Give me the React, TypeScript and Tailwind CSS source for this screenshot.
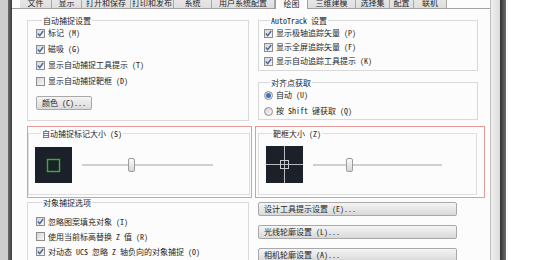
import React from "react";

const font = "font-['Noto_Sans_Mono_CJK_SC','Noto_Sans_CJK_SC',sans-serif]";

const tabs = [
  { t: "文件", w: "w-[32px]" },
  { t: "显示", w: "w-[30px]" },
  { t: "打开和保存", w: "w-[49px]" },
  { t: "打印和发布", w: "w-[43px]" },
  { t: "系统", w: "w-[38px]" },
  { t: "用户系统配置", w: "w-[63px]" },
  { t: "绘图", w: "w-[33px]", on: true },
  { t: "三维建模", w: "w-[48px]" },
  { t: "选择集", w: "w-[34px]" },
  { t: "配置", w: "w-[24px]" },
  { t: "联机", w: "w-[33px]" },
];

function Box({ on }: { on?: boolean }) {
  return (
    <span className="flex h-[9px] w-[9px] shrink-0 items-center justify-center border border-[#8e8e8e] bg-linear-to-br from-[#d6d6d6] to-[#f7f7f7]">
      {on && (
        <svg width="7" height="7" viewBox="0 0 7 7">
          <path d="M0.8 3.6 L2.7 5.6 L6.2 1" fill="none" stroke="#4a66a0" strokeWidth="1.4" />
        </svg>
      )}
    </span>
  );
}

function Radio({ on }: { on?: boolean }) {
  return (
    <span className="flex h-[9px] w-[9px] shrink-0 items-center justify-center rounded-full border border-[#8e8e8e] bg-linear-to-br from-[#d6d6d6] to-[#f7f7f7]">
      {on && <span className="h-[5px] w-[5px] rounded-full bg-[#3f72b8]" />}
    </span>
  );
}

function Row({ on, label, h }: { on?: boolean; label: string; h: string }) {
  return (
    <div className={`flex items-center gap-[3px] ${h}`}>
      <Box on={on} />
      <span>{label}</span>
    </div>
  );
}

function Btn({ label, className }: { label: string; className: string }) {
  return (
    <div
      className={`flex h-[14px] items-center rounded-[2px] border border-[#a8a8a8] bg-linear-to-b from-[#f5f5f5] to-[#d9d9d9] pl-[5px] ${className}`}
    >
      {label}
    </div>
  );
}

function Legend({ children }: { children: React.ReactNode }) {
  return <legend className="ml-[6px] px-[1px] leading-[9px]">{children}</legend>;
}

function Thumb({ pos }: { pos: string }) {
  return (
    <div
      className={`absolute top-0 h-[14px] w-[7px] rounded-[2px] border border-[#9c9c9c] bg-linear-to-b from-[#fafafa] to-[#d6d6d6] ${pos}`}
    />
  );
}

export default function App() {
  return (
    <div className={`flex h-[260px] w-[557px] overflow-hidden bg-white text-[8px] leading-none text-[#262626] ${font}`}>
      <div className="w-[8px] bg-[#cdcdcd]" />
      <div className="w-[4px] bg-linear-to-r from-[#6c6c6c] to-[#3c3c3c]" />

      <div className="flex w-[478px] flex-col bg-[#fcfcfc]">
        {/* tab strip */}
        <div className="flex h-[9px] items-end border-b border-[#a0a0a0] pl-[8px]">
          {tabs.map((tab) =>
            tab.on ? (
              <div
                key={tab.t}
                className={`-mb-[1px] flex h-[22px] items-end justify-center border-x border-[#a0a0a0] bg-[#fcfcfc] pb-[1px] ${tab.w}`}
              >
                {tab.t}
              </div>
            ) : (
              <div
                key={tab.t}
                className={`flex h-[21px] items-end justify-center border-r border-[#a8a8a8] bg-linear-to-b from-[#f4f4f4] to-[#dedede] pb-[1px] ${tab.w}`}
              >
                {tab.t}
              </div>
            )
          )}
        </div>

        <div className="flex flex-col pl-[15px]">
          {/* top groups */}
          <div className="flex pt-[7px]">
            <fieldset className="h-[105px] w-[222px] border border-[#d9d9d9] pl-[8px]">
              <Legend>自动捕捉设置</Legend>
              <Row on label="标记 (M)" h="h-[16px]" />
              <Row on label="磁吸 (G)" h="h-[16px]" />
              <Row on label="显示自动捕捉工具提示 (T)" h="h-[16px]" />
              <Row label="显示自动捕捉靶框 (D)" h="h-[16px]" />
              <Btn label="颜色 (C)..." className="mt-[7px] w-[56px]" />
            </fieldset>

            <div className="ml-[9px] flex w-[220px] flex-col">
              <fieldset className="h-[55px] border border-[#d9d9d9] pl-[5px] pt-[1px]">
                <Legend>AutoTrack 设置</Legend>
                <Row on label="显示极轴追踪矢量 (P)" h="h-[14px]" />
                <Row on label="显示全屏追踪矢量 (F)" h="h-[14px]" />
                <Row on label="显示自动追踪工具提示 (K)" h="h-[14px]" />
              </fieldset>
              <fieldset className="mt-[7px] h-[42px] border border-[#d9d9d9] pl-[5px]">
                <Legend>对齐点获取</Legend>
                <div className="flex h-[16px] items-center gap-[3px]">
                  <Radio on />
                  <span>自动 (U)</span>
                </div>
                <div className="flex h-[16px] items-center gap-[3px]">
                  <Radio />
                  <span>按 Shift 键获取 (Q)</span>
                </div>
              </fieldset>
            </div>
          </div>

          {/* size groups, marked red */}
          <div className="mt-[5px] flex">
            <div className="h-[72px] w-[225px] border border-[#e59a9a] pt-[2px]">
              <fieldset className="h-[66px] w-[222px] border border-[#dedede] pl-[6px]">
                <Legend>自动捕捉标记大小 (S)</Legend>
                <div className="mt-[9px] flex items-center gap-[10px]">
                  <svg width="37" height="36" viewBox="0 0 37 36" className="shrink-0">
                    <rect width="37" height="36" fill="#1c2029" />
                    <rect x="12.5" y="12.5" width="12" height="12" fill="none" stroke="#2fb52f" strokeWidth="1.4" />
                  </svg>
                  <div className="relative flex h-[14px] w-[131px] items-center">
                    <div className="h-[2px] w-full bg-[#d0d0d0]" />
                    <Thumb pos="left-[46px]" />
                  </div>
                </div>
              </fieldset>
            </div>

            <div className="ml-[3px] h-[72px] w-[230px] border border-[#e59a9a] pl-[2px] pt-[2px]">
              <fieldset className="h-[66px] w-[219px] border border-[#dedede] pl-[7px]">
                <Legend>靶框大小 (Z)</Legend>
                <div className="mt-[8px] flex items-center gap-[10px]">
                  <svg width="37" height="37" viewBox="0 0 37 37" className="shrink-0">
                    <rect width="37" height="37" fill="#1c2029" />
                    <line x1="0" y1="18.5" x2="37" y2="18.5" stroke="#b9bcc2" strokeWidth="1" />
                    <line x1="18.5" y1="0" x2="18.5" y2="37" stroke="#b9bcc2" strokeWidth="1" />
                    <rect x="14.5" y="14.5" width="8" height="8" fill="none" stroke="#c8cad0" strokeWidth="1" />
                  </svg>
                  <div className="relative flex h-[14px] w-[129px] items-center">
                    <div className="h-[2px] w-full bg-[#d0d0d0]" />
                    <Thumb pos="left-[33px]" />
                  </div>
                </div>
              </fieldset>
            </div>
          </div>

          {/* bottom */}
          <div className="flex">
            <fieldset className="h-[80px] w-[222px] border border-[#d9d9d9] pl-[8px]">
              <Legend>对象捕捉选项</Legend>
              <div className="mt-[7px]">
                <Row on label="忽略图案填充对象 (I)" h="h-[15px]" />
                <Row label="使用当前标高替换 Z 值 (R)" h="h-[15px]" />
                <Row on label="对动态 UCS 忽略 Z 轴负向的对象捕捉 (O)" h="h-[15px]" />
              </div>
            </fieldset>
            <div className="ml-[9px] flex w-[199px] flex-col gap-[9px] pt-[4px]">
              <Btn label="设计工具提示设置 (E)..." className="w-full" />
              <Btn label="光线轮廓设置 (L)..." className="w-full" />
              <Btn label="相机轮廓设置 (A)..." className="w-full" />
            </div>
          </div>
        </div>
      </div>

      <div className="w-[10px] border-l border-[#bcbcbc] bg-linear-to-r from-[#f0f0f0] to-[#dcdcdc]" />
      <div className="w-[6px] bg-linear-to-r from-[#333] to-[#6e6e6e]" />
      <div className="flex-1 bg-white" />
    </div>
  );
}
